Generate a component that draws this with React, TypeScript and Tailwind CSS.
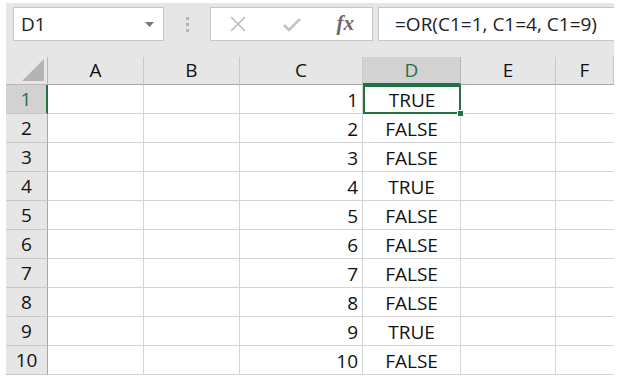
import React from "react";

const cols = ["A", "B", "C", "D", "E", "F"];
const data = [
  [1, "TRUE"],
  [2, "FALSE"],
  [3, "FALSE"],
  [4, "TRUE"],
  [5, "FALSE"],
  [6, "FALSE"],
  [7, "FALSE"],
  [8, "FALSE"],
  [9, "TRUE"],
  [10, "FALSE"],
];

const font = { fontFamily: "'Open Sans', 'Noto Sans', sans-serif" };

export default function App() {
  return (
    <div className="w-[618px] h-[380px] bg-white pl-[6px] pt-[3px] overflow-hidden" style={font}>
      <div className="w-[608px] bg-[#e6e6e6]">
        {/* toolbar */}
        <div className="h-[54px] flex items-start pt-[4px] pl-[7px]">
          <div className="w-[151px] h-[34px] bg-white border border-[#c6c6c6] flex items-center justify-between pl-[7px] pr-[9px]">
            <span className="text-[19px] text-[#222]">D1</span>
            <svg width="9" height="5" viewBox="0 0 9 5"><path d="M0 0 L9 0 L4.5 5 Z" fill="#777" /></svg>
          </div>
          <div className="w-[46px] h-[34px] flex flex-col items-center justify-center gap-[3px]">
            <div className="w-[3px] h-[3px] bg-[#b5b5b5]" />
            <div className="w-[3px] h-[3px] bg-[#b5b5b5]" />
            <div className="w-[3px] h-[3px] bg-[#b5b5b5]" />
          </div>
          <div className="w-[163px] h-[34px] bg-white border border-[#c6c6c6] flex items-center">
            <div className="w-[54px] flex justify-center">
              <svg width="16" height="16" viewBox="0 0 16 16"><path d="M1 1 L15 15 M15 1 L1 15" stroke="#bdbdbd" strokeWidth="1.6" /></svg>
            </div>
            <div className="w-[54px] flex justify-center">
              <svg width="18" height="15" viewBox="0 0 18 15"><path d="M1 8 L6 13 L17 2" stroke="#c4c4c4" strokeWidth="2.6" fill="none" /></svg>
            </div>
            <div className="w-[54px] flex justify-center">
              <span className="text-[21px] italic font-bold text-[#6a6a6a]" style={{ fontFamily: "'Liberation Serif', serif" }}>fx</span>
            </div>
          </div>
          <div className="w-[5px]" />
          <div className="flex-1 h-[34px] bg-white border border-[#c6c6c6] border-r-0 flex items-center pl-[16px]">
            <span className="text-[19px] text-[#222]">=OR(C1=1, C1=4, C1=9)</span>
          </div>
        </div>
        {/* grid */}
        <div className="grid grid-cols-[42px_96px_96px_123px_98px_95px_58px] grid-rows-[28px_repeat(10,29px)] text-[19px] text-[#111]">
          <div className="relative bg-[#e6e6e6] border-r border-b border-[#b8b8b8]">
            <svg className="absolute right-[3px] bottom-[3px]" width="22" height="22" viewBox="0 0 22 22"><path d="M22 0 L22 22 L0 22 Z" fill="#b3b3b3" /></svg>
          </div>
          {cols.map((c) => (
            <div
              key={c}
              className={
                c === "D"
                  ? "bg-[#d2d2d2] text-[#217346] border-r border-[#b8b8b8] border-b-2 border-b-[#217346] flex items-center justify-center"
                  : "bg-[#e6e6e6] border-r border-b border-[#c8c8c8] border-b-[#a8a8a8] flex items-center justify-center"
              }
            >
              {c}
            </div>
          ))}
          {data.map(([n, v], i) => (
            <React.Fragment key={i}>
              <div
                className={
                  i === 0
                    ? "bg-[#d2d2d2] text-[#217346] border-r-2 border-r-[#217346] border-b border-[#c8c8c8] flex items-center justify-center"
                    : "bg-[#e6e6e6] border-r border-[#a8a8a8] border-b border-b-[#c8c8c8] flex items-center justify-center"
                }
              >
                {n}
              </div>
              <div className="bg-white border-r border-b border-[#d4d4d4]" />
              <div className="bg-white border-r border-b border-[#d4d4d4]" />
              <div className="bg-white border-r border-b border-[#d4d4d4] flex items-center justify-end pr-[4px] pt-[2px]">{n}</div>
              <div
                className={
                  i === 0
                    ? "relative bg-white border-2 border-[#217346] flex items-center justify-center pt-[1px]"
                    : "bg-white border-r border-b border-[#d4d4d4] flex items-center justify-center pt-[2px]"
                }
              >
                {v}
                {i === 0 && (
                  <div className="absolute right-[-5px] bottom-[-5px] w-[7px] h-[7px] bg-[#217346] border border-white" />
                )}
              </div>
              <div className="bg-white border-r border-b border-[#d4d4d4]" />
              <div className="bg-white border-b border-[#d4d4d4]" />
            </React.Fragment>
          ))}
        </div>
      </div>
    </div>
  );
}
